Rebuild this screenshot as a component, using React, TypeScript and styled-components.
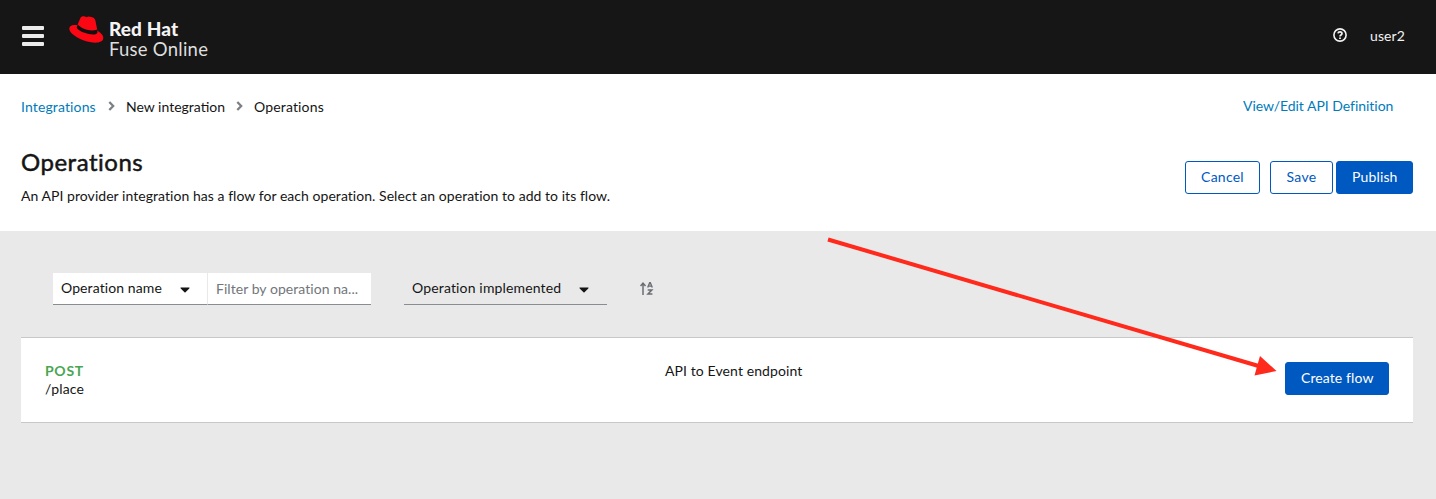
import React from "react";
import styled, { createGlobalStyle } from "styled-components";

const Global = createGlobalStyle`
  *, *::before, *::after { box-sizing: border-box; }
  body { margin: 0; background: #e9e9e9; }
  button, input { font: inherit; letter-spacing: inherit; }
`;

const Page = styled.div`
  height: 499px;
  overflow: hidden;
  position: relative;
  background: #e9e9e9;
  color: #151515;
  font-family: Lato, "Liberation Sans", sans-serif;
  font-size: 14px;
  line-height: 21px;
`;

const Text = styled.span<{ $w: number; $ls?: number }>`
  display: block;
  flex: none;
  width: ${(p) => p.$w}px;
  letter-spacing: ${(p) => p.$ls ?? 0.1}px;
  white-space: nowrap;
`;

const Masthead = styled.header`
  height: 74px;
  padding: 0 31px 0 22px;
  display: flex;
  align-items: flex-start;
  background: #161616;
`;

const MenuButton = styled.button`
  width: 22px;
  height: 20px;
  margin: 26px 25px 0 0;
  padding: 0;
  border: 0;
  background: none;
  display: flex;
  flex-direction: column;
  gap: 4px;
`;

const MenuBar = styled.i`
  width: 22px;
  height: 4px;
  border-radius: 1px;
  background: #ececec;
`;

const Brand = styled.div`
  display: flex;
  color: #f4f4f4;
  margin-top: 15px;
`;

const BrandName = styled.div`
  margin: 4px 0 0 5px;
  font-size: 18.5px;
  line-height: 20px;
`;

const BrandStrong = styled(Text)`
  font-size: 19px;
  font-weight: 900;
`;

const BrandLight = styled(Text)`
  color: #dedede;
`;

const Tools = styled.div`
  margin: 25px 0 0 auto;
  display: flex;
  color: #f2f2f2;
`;

const HelpIcon = styled.svg`
  margin: 3px 23px 0 0;
`;

const Intro = styled.section`
  height: 157px;
  padding: 22px 23px 0 21px;
  background: #fff;
`;

const Crumbs = styled.nav`
  height: 21px;
  display: flex;
`;

const Crumb = styled(Text)<{ $link?: boolean }>`
  color: ${(p) => (p.$link ? "#007bba" : "#151515")};
`;

const Chevron = styled.svg`
  margin: 5px 11px 0 12px;
`;

const DefinitionLink = styled(Text)`
  margin: -1px 19px 0 auto;
  color: #007bba;
`;

const IntroRow = styled.div`
  display: flex;
  justify-content: space-between;
  margin-top: 29px;
`;

const Title = styled.h1`
  margin: 0;
  font-size: 24px;
  line-height: 32px;
  font-weight: 400;
  -webkit-text-stroke: 0.5px #151515;
`;

const Description = styled.p`
  margin: 7px 0 0;
`;

const Actions = styled.div`
  display: flex;
  margin-top: 15px;
`;

const Button = styled.button<{ $primary?: boolean; $gap?: number }>`
  height: 33px;
  margin: 0 0 0 ${(p) => p.$gap ?? 0}px;
  padding: 0 15px 2px;
  display: flex;
  align-items: center;
  border: 1px solid #0059c1;
  border-radius: 3px;
  background: ${(p) => (p.$primary ? "#0059c1" : "#fff")};
  color: ${(p) => (p.$primary ? "#fff" : "#0059c1")};
`;

const Toolbar = styled.div`
  height: 32px;
  margin: 42px 0 0 53px;
  display: flex;
`;

const Select = styled.div<{ $w: number; $filled?: boolean }>`
  width: ${(p) => p.$w}px;
  height: 32px;
  padding: 4px 0 0 8px;
  display: flex;
  background: ${(p) => (p.$filled ? "#fff" : "transparent")};
  border-bottom: 1px solid #8a8d90;
`;

const Caret = styled.svg`
  margin: 10px 0 0 18px;
`;

const Filter = styled.div`
  width: 164px;
  height: 32px;
  margin-right: 33px;
  padding: 5px 0 0 8px;
  border-left: 1px solid #e9e9e9;
  border-bottom: 1px solid #8a8d90;
  background: #fff;
  color: #72767b;
`;

const SortIcon = styled.svg`
  margin: 9px 0 0 33px;
`;

const Row = styled.div`
  height: 86px;
  margin: 32px 23px 0 21px;
  padding: 24px 24px 0;
  display: flex;
  background: #fff;
  border-top: 1px solid #c8c8c8;
  border-bottom: 1px solid #c8c8c8;
`;

const Endpoint = styled.div`
  width: 620px;
  line-height: 18px;
`;

const Method = styled(Text)`
  color: #4aa553;
  font-weight: 700;
`;

const RowText = styled(Text)`
  line-height: 18px;
`;

const RowAction = styled.div`
  margin-left: auto;
`;

const Arrow = styled.svg`
  position: absolute;
  left: 820px;
  top: 230px;
`;

const Hat = () => (
  <svg width="35" height="29" viewBox="0 0 35 29">
    <path
      fill="#fb0714"
      d="M8.3 10.2C5.5 9.8 1 9.6.3 13.4c-.6 5 9.3 10.8 17.8 13.2 7.2 2 15.9 1.8 16.2-3.5.1-3-2.9-5.4-5.9-7.3L26.4 5.4c-.5-1.9-1.7-2.9-3.9-3.4-2.1-.5-3.3-1-5 .2-1.9-1.2-5.3-1.3-6.2 1z"
    />
    <path fill="#111" d="M8.8 9.3c3.5 4.8 12.2 7.3 18.1 5.8.7-.2 1-.4 1.1-.8l.5 2.6c.2 2.1-3 2.9-7 2.4C14.7 18.4 6.9 14.3 7.8 12z" />
  </svg>
);

const Separator = () => (
  <Chevron width="7" height="10" viewBox="0 0 7 10">
    <path d="M1.3 1L5.2 5L1.3 9" fill="none" stroke="#7d8083" strokeWidth="2.3" />
  </Chevron>
);

const DropCaret = () => (
  <Caret width="10" height="6" viewBox="0 0 10 6">
    <path d="M1 .5h8c.6 0 .7.5.3.9L5.5 5.2a.7.7 0 0 1-1 0L.7 1.4C.3 1 .4.5 1 .5z" fill="#151515" />
  </Caret>
);

export default function App() {
  return (
    <Page>
      <Global />
      <Masthead>
        <MenuButton aria-label="Menu">
          <MenuBar />
          <MenuBar />
          <MenuBar />
        </MenuButton>
        <Brand>
          <Hat />
          <BrandName>
            <BrandStrong $w={80} $ls={0.1}>Red Hat</BrandStrong>
            <BrandLight $w={110} $ls={0.25}>Fuse Online</BrandLight>
          </BrandName>
        </Brand>
        <Tools>
          <HelpIcon width="14" height="14" viewBox="0 0 14 14" fill="none" stroke="#f2f2f2">
            <circle cx="7" cy="7" r="6.1" strokeWidth="1.6" />
            <path d="M5 5.4C5.2 3.3 9 3.3 9 5.5C9 7 7 6.9 7 8.4" strokeWidth="1.7" />
            <path d="M7 9.4v1.7" strokeWidth="1.8" />
          </HelpIcon>
          <Text $w={35}>user2</Text>
        </Tools>
      </Masthead>

      <Intro>
        <Crumbs>
          <Crumb $w={75} $link $ls={0.13}>Integrations</Crumb>
          <Separator />
          <Crumb $w={98} $ls={0}>New integration</Crumb>
          <Separator />
          <Crumb $w={80} $ls={0.15}>Operations</Crumb>
          <DefinitionLink $w={151} $ls={-0.03}>View/Edit API Definition</DefinitionLink>
        </Crumbs>
        <IntroRow>
          <div>
            <Title><Text $w={130} $ls={0.5}>Operations</Text></Title>
            <Description>
              <Text $w={600} $ls={0.045}>
                An API provider integration has a flow for each operation. Select an operation to add to its flow.
              </Text>
            </Description>
          </div>
          <Actions>
            <Button><Text $w={43} $ls={0.25}>Cancel</Text></Button>
            <Button $gap={10}><Text $w={31} $ls={0.3}>Save</Text></Button>
            <Button $gap={3} $primary><Text $w={45} $ls={0.15}>Publish</Text></Button>
          </Actions>
        </IntroRow>
      </Intro>

      <Toolbar>
        <Select $w={154} $filled>
          <Text $w={101}>Operation name</Text>
          <DropCaret />
        </Select>
        <Filter><Text $w={142} $ls={0.05}>Filter by operation na...</Text></Filter>
        <Select $w={203}>
          <Text $w={149} $ls={0.15}>Operation implemented</Text>
          <DropCaret />
        </Select>
        <SortIcon width="14" height="13" viewBox="0 0 14 13" fill="none" stroke="#6a6e73">
          <path d="M3 13V1.4M.5 4L3 1.2L5.5 4" strokeWidth="1.5" />
          <path d="M7.7 5.5L9.7.8h.6l2 4.7M8.4 4.1h3.2" strokeWidth="1.4" />
          <path d="M7.7 8.1h4.1L8 11.9h4.4" strokeWidth="1.5" />
        </SortIcon>
      </Toolbar>

      <Row>
        <Endpoint>
          <Method $w={60} $ls={0.7}>POST</Method>
          <Text $w={60} $ls={0.2}>/place</Text>
        </Endpoint>
        <RowText $w={160}>API to Event endpoint</RowText>
        <RowAction>
          <Button $primary><Text $w={72}>Create flow</Text></Button>
        </RowAction>
      </Row>

      <Arrow width="460" height="150" viewBox="820 230 460 150">
        <path d="M828 239.5L1262 367" stroke="#ff2a1c" strokeWidth="4" />
        <path d="M1260 356L1276.5 371L1254.5 375.5z" fill="#ff2a1c" />
      </Arrow>
    </Page>
  );
}
